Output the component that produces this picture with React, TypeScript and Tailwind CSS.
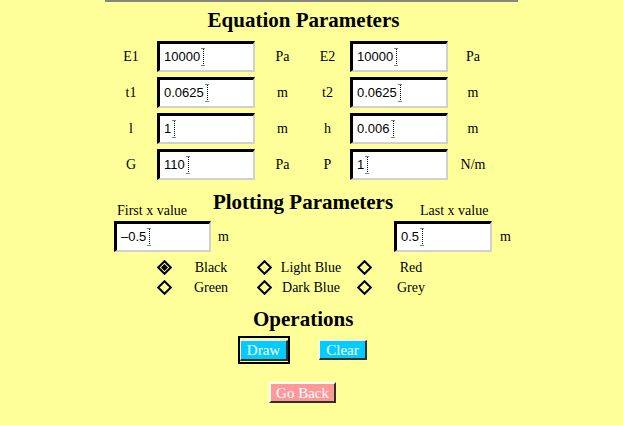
import React from "react";

const serif = { fontFamily: '"Liberation Serif", "Times New Roman", serif' };
const sans = { fontFamily: '"Liberation Sans", Arial, sans-serif' };

const Caret = () => (
  <svg width="5" height="18" viewBox="0 0 5 18" className="ml-[1px] shrink-0">
    <line x1="2.5" y1="1" x2="2.5" y2="17" stroke="#000" strokeWidth="1" strokeDasharray="1 1" />
    <line x1="0.5" y1="0.5" x2="4.5" y2="0.5" stroke="#000" strokeWidth="1" strokeDasharray="1 1" />
    <line x1="0.5" y1="17.5" x2="4.5" y2="17.5" stroke="#000" strokeWidth="1" strokeDasharray="1 1" />
  </svg>
);

const Field = ({ value, w = "w-[98px]" }: { value: string; w?: string }) => (
  <div
    className={`${w} h-[31px] flex items-center bg-white border-t-[3px] border-l-[3px] border-t-black border-l-black border-b-2 border-r-2 border-b-[#d0d0d0] border-r-[#d0d0d0] pl-[4px] text-[13px] text-black`}
    style={sans}
  >
    <span>{value}</span>
    <Caret />
  </div>
);

const Diamond = ({ checked }: { checked?: boolean }) => (
  <svg width="15" height="15" viewBox="0 0 15 15" className="shrink-0">
    <polygon points="7.5,1.2 13.8,7.5 7.5,13.8 1.2,7.5" fill="none" stroke="#000" strokeWidth="2" />
    {checked && <polygon points="7.5,4 11,7.5 7.5,11 4,7.5" fill="#000" />}
  </svg>
);

const rows = [
  ["E1", "10000", "Pa", "E2", "10000", "Pa"],
  ["t1", "0.0625", "m", "t2", "0.0625", "m"],
  ["l", "1", "m", "h", "0.006", "m"],
  ["G", "110", "Pa", "P", "1", "N/m"],
];

const colours = [
  ["Black", true],
  ["Light Blue", false],
  ["Red", false],
  ["Green", false],
  ["Dark Blue", false],
  ["Grey", false],
] as const;

const App = () => {
  return (
    <div className="w-[623px] h-[425px] bg-[#ffff99] overflow-hidden text-black" style={serif}>
      <div className="w-[413px] mx-auto">
        <div className="h-[2px] bg-[#858585]"></div>

        {/* Equation parameters */}
        <h2 className="mt-[6px] h-[24px] leading-[24px] text-center text-[21px] font-bold pr-[16px] whitespace-nowrap">
          Equation Parameters
        </h2>
        <div className="mt-[9px] grid grid-cols-[52px_98px_50px_45px_98px_50px] gap-y-[5px] text-[14px]">
          {rows.map((r) => (
            <React.Fragment key={r[0]}>
              <div className="h-[31px] flex items-center justify-center">{r[0]}</div>
              <Field value={r[1]} />
              <div className="h-[31px] flex items-center justify-center pl-[5px]">{r[2]}</div>
              <div className="h-[31px] flex items-center justify-center">{r[3]}</div>
              <Field value={r[4]} />
              <div className="h-[31px] flex items-center justify-center">{r[5]}</div>
            </React.Fragment>
          ))}
        </div>

        {/* Plotting parameters */}
        <div className="mt-[10px] flex items-start">
          <div className="w-[107px] pl-[12px] pt-[13px] text-[14px] leading-[16px] whitespace-nowrap">First x value</div>
          <h2 className="w-[182px] h-[24px] leading-[24px] text-center text-[21px] font-bold whitespace-nowrap">
            Plotting Parameters
          </h2>
          <div className="pl-[26px] pt-[13px] text-[14px] leading-[16px] whitespace-nowrap">Last x value</div>
        </div>
        <div className="mt-[2px] flex items-center text-[14px]">
          <div className="w-[289px] flex items-center pl-[9px]">
            <Field value={"\u20130.5"} w="w-[97px]" />
            <span className="ml-[7px]">m</span>
          </div>
          <div className="flex items-center">
            <Field value="0.5" w="w-[98px]" />
            <span className="ml-[8px]">m</span>
          </div>
        </div>

        {/* Colours */}
        <div className="mt-[5px] pl-[52px] grid grid-cols-[100px_100px_100px] text-[14px]">
          {colours.map(([name, checked]) => (
            <div key={name} className="h-[20px] flex items-center">
              <Diamond checked={checked} />
              <span className="ml-[3px] w-[72px] text-center whitespace-nowrap">{name}</span>
            </div>
          ))}
        </div>

        {/* Operations */}
        <h2 className="mt-[10px] h-[24px] leading-[24px] text-[21px] font-bold pl-[148px] whitespace-nowrap">Operations</h2>
        <div className="mt-[5px] ml-[133px] flex items-center">
          <div className="border-[2px] border-black">
            <button className="w-[48px] h-[21px] bg-[#00ccff] text-white text-[15px] leading-[16px] border-t border-l border-white border-b-2 border-r-2 border-b-[#303030] border-r-[#303030]" style={serif}>
              Draw
            </button>
          </div>
          <button className="ml-[29px] w-[48px] h-[20px] bg-[#00ccff] text-white text-[15px] leading-[16px] border-t border-l border-white border-b-2 border-r-2 border-b-[#303030] border-r-[#303030]" style={serif}>
            Clear
          </button>
        </div>
        <button className="mt-[18px] ml-[164px] w-[67px] h-[21px] bg-[#ff9999] text-white text-[15px] leading-[16px] border-t-2 border-l-2 border-white border-b-2 border-r-2 border-b-[#303030] border-r-[#303030]" style={serif}>
          Go Back
        </button>
      </div>
    </div>
  );
};

export default App;
